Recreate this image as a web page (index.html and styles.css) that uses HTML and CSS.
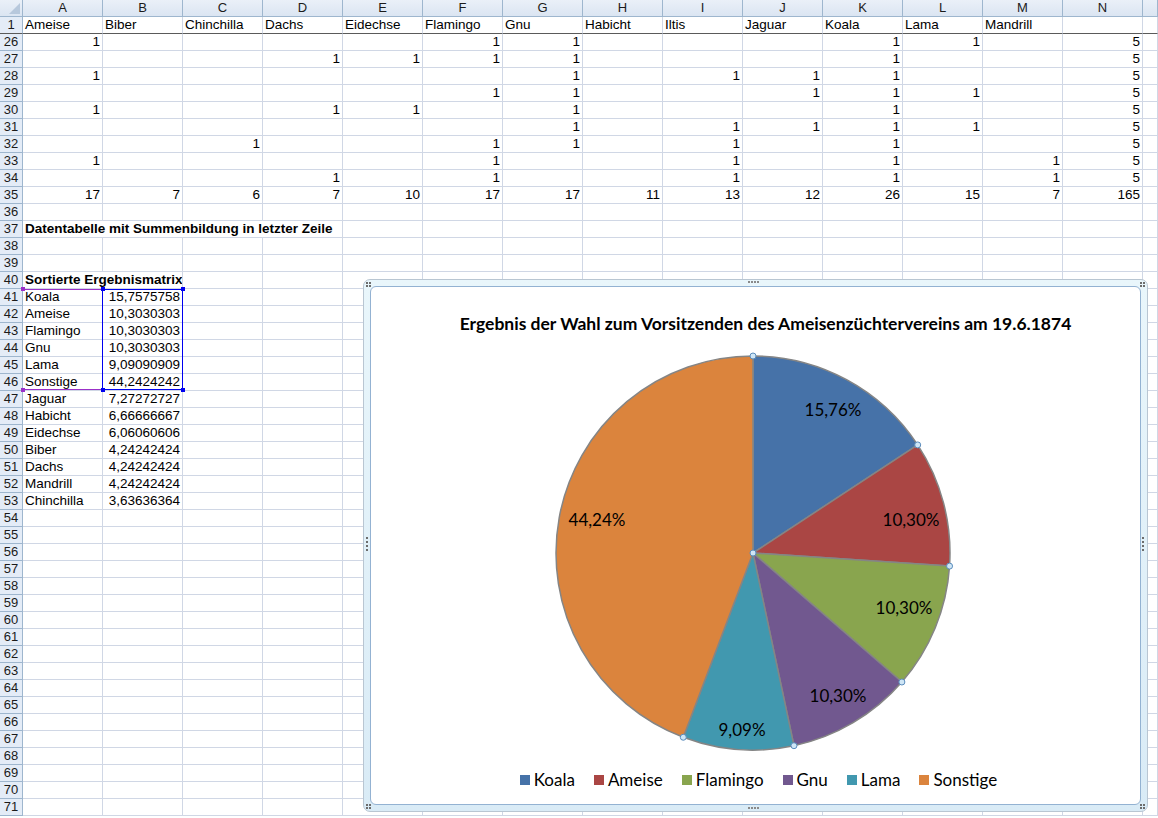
FILE: index.html
```html
<!DOCTYPE html>
<html lang="de">
<head>
    <meta charset="UTF-8">
    <title>Mappe1 - Ameisenzüchterverein</title>
    <link rel="stylesheet" href="styles.css">
</head>
<body>

<div class="sheet" id="sheet"></div>

<!-- Markierung der Diagrammquelle: Kategorien (lila) und Werte (blau) -->
<div class="range range-cat">
    <span class="knob tl"></span><span class="knob bl"></span>
</div>
<div class="range range-val">
    <span class="knob tl"></span><span class="knob tr"></span>
    <span class="knob bl"></span><span class="knob br"></span>
</div>

<div class="chart">
    <span class="grip g-tl"></span><span class="grip g-tr"></span>
    <span class="grip g-bl"></span><span class="grip g-br"></span>
    <span class="grip-h g-top"></span><span class="grip-h g-bottom"></span>
    <span class="grip-v g-left"></span><span class="grip-v g-right"></span>
    <div class="plot">
        <div class="chart-title">Ergebnis der Wahl zum Vorsitzenden des Ameisenzüchtervereins am 19.6.1874</div>
        <svg class="pie" width="768" height="430" viewBox="0 0 768 430">
            <g stroke="#858585" stroke-width="1.5" stroke-linejoin="round">
                <path fill="#4672a8" d="M381 219 L381 22 A197 197 0 0 1 545.70 110.92 Z"/>
                <path fill="#aa4644" d="M381 219 L545.70 110.92 A197 197 0 0 1 577.56 232.12 Z"/>
                <path fill="#89a54e" d="M381 219 L577.56 232.12 A197 197 0 0 1 529.88 348.01 Z"/>
                <path fill="#71588f" d="M381 219 L529.88 348.01 A197 197 0 0 1 421.96 411.70 Z"/>
                <path fill="#4198af" d="M381 219 L421.96 411.70 A197 197 0 0 1 311.29 403.25 Z"/>
                <path fill="#db843d" d="M381 219 L311.29 403.25 A197 197 0 0 1 381 22 Z"/>
            </g>
            <g class="pct">
                <text x="461" y="82">15,76%</text>
                <text x="539" y="192">10,30%</text>
                <text x="532" y="280">10,30%</text>
                <text x="466" y="368">10,30%</text>
                <text x="370" y="402">9,09%</text>
                <text x="225" y="192">44,24%</text>
            </g>
            <!-- Ziehpunkte der markierten Datenreihe -->
            <g fill="#cfe6f6" stroke="#5a8cbc" stroke-width="1">
                <circle cx="381" cy="22" r="3"/>
                <circle cx="545.70" cy="110.92" r="3"/>
                <circle cx="577.56" cy="232.12" r="3"/>
                <circle cx="529.88" cy="348.01" r="3"/>
                <circle cx="421.96" cy="411.70" r="3"/>
                <circle cx="311.29" cy="403.25" r="3"/>
                <circle cx="381" cy="219" r="3"/>
            </g>
        </svg>
        <div class="legend">
            <span class="key"><i style="background:#4672a8"></i>Koala</span>
            <span class="key"><i style="background:#aa4644"></i>Ameise</span>
            <span class="key"><i style="background:#89a54e"></i>Flamingo</span>
            <span class="key"><i style="background:#71588f"></i>Gnu</span>
            <span class="key"><i style="background:#4198af"></i>Lama</span>
            <span class="key"><i style="background:#db843d"></i>Sonstige</span>
        </div>
    </div>
</div>

<script>
    const cols = 'ABCDEFGHIJKLMN'.split('');

    // Stimmzettel: jede Zeile nennt die angekreuzten Spalten, Spalte N ist die Summe (immer 5)
    const votes = {
        26: 'AFGKL', 27: 'DEFGK', 28: 'AGIJK', 29: 'FGJKL', 30: 'ADEGK',
        31: 'GIJKL', 32: 'CFGIK', 33: 'AFIKM', 34: 'DFIKM'
    };

    const ranking = [
        ['Koala', '15,7575758'], ['Ameise', '10,3030303'], ['Flamingo', '10,3030303'],
        ['Gnu', '10,3030303'], ['Lama', '9,09090909'], ['Sonstige', '44,2424242'],
        ['Jaguar', '7,27272727'], ['Habicht', '6,66666667'], ['Eidechse', '6,06060606'],
        ['Biber', '4,24242424'], ['Dachs', '4,24242424'], ['Mandrill', '4,24242424'],
        ['Chinchilla', '3,63636364']
    ];

    const data = {};
    data[1] = ['Ameise', 'Biber', 'Chinchilla', 'Dachs', 'Eidechse', 'Flamingo', 'Gnu',
               'Habicht', 'Iltis', 'Jaguar', 'Koala', 'Lama', 'Mandrill', ''];
    for (const r in votes) {
        data[r] = cols.map(c => votes[r].includes(c) ? '1' : '');
        data[r][13] = '5';
    }
    data[35] = ['17', '7', '6', '7', '10', '17', '17', '11', '13', '12', '26', '15', '7', '165'];
    ranking.forEach((pair, i) => { data[41 + i] = pair; });

    // Überlaufender Fließtext belegt mehrere Spalten
    const wide = {
        37: { text: 'Datentabelle mit Summenbildung in letzter Zeile', span: 4 },
        40: { text: 'Sortierte Ergebnismatrix', span: 2 }
    };

    const sheet = document.getElementById('sheet');

    function cell(cls, text) {
        const div = document.createElement('div');
        div.className = cls;
        div.textContent = text || '';
        sheet.appendChild(div);
        return div;
    }

    // Spaltenköpfe
    cell('corner');
    cols.forEach(c => cell('ch', c));
    cell('ch');

    const rowNumbers = [1];
    for (let r = 26; r <= 71; r++) rowNumbers.push(r);

    rowNumbers.forEach(r => {
        const frozen = r === 1 ? ' frozen' : '';
        cell('rh' + frozen, r);
        const values = data[r] || [];
        let c = 0;
        while (c < cols.length) {
            if (c === 0 && wide[r]) {
                const div = cell('cell bold' + frozen, wide[r].text);
                div.style.gridColumn = 'span ' + wide[r].span;
                c += wide[r].span;
                continue;
            }
            const v = values[c] || '';
            const isNum = /^[\d,]+$/.test(v);
            cell('cell' + (isNum ? ' num' : '') + frozen, v);
            c++;
        }
        cell('cell' + frozen);
    });
</script>

</body>
</html>
```

FILE: styles.css
```css
body {
    margin: 0;
    width: 1158px;
    height: 818px;
    overflow: hidden;
    background: white;
    font-family: "Liberation Sans", Arial, sans-serif;
    position: relative;
}

/* Tabellenblatt */
.sheet {
    display: grid;
    grid-template-columns: 23px repeat(14, 80px) 1fr;
    grid-auto-rows: 17px;
    font-size: 13.5px;
    line-height: 16px;
    color: #000;
}
.sheet > div {
    box-sizing: border-box;
    white-space: nowrap;
    overflow: hidden;
}
.cell {
    border-right: 1px solid #d0d7e5;
    border-bottom: 1px solid #d0d7e5;
    padding: 0 2px;
}
.num {
    text-align: right;
}
.bold {
    font-weight: bold;
}
.ch, .rh, .corner {
    background: linear-gradient(#eaf0f8, #dbe5f2);
    border-right: 1px solid #9eb6ce;
    border-bottom: 1px solid #9eb6ce;
    text-align: center;
    color: #1b1b1b;
    font-size: 13px;
}
.rh {
    background: #e4ecf7;
}
.corner {
    position: relative;
}
.corner::after {
    content: "";
    position: absolute;
    right: 2px;
    bottom: 2px;
    width: 11px;
    height: 11px;
    background: #b7c8dc;
    clip-path: polygon(100% 0, 100% 100%, 0 100%);
}
.frozen {
    border-bottom: 1px solid #5a5a5a;
}

/* Quellbereiche des Diagramms */
.range {
    position: absolute;
    top: 289px;
    height: 101px;
    box-sizing: border-box;
}
.range-cat {
    left: 23px;
    width: 80px;
    border-top: 1px solid #9b30c8;
    border-bottom: 1px solid #9b30c8;
}
.range-val {
    left: 102px;
    width: 81px;
    border: 1px solid #0000f0;
}
.knob {
    position: absolute;
    width: 4px;
    height: 4px;
    background: #0000f0;
}
.range-cat .knob {
    background: #9b30c8;
}
.knob.tl { left: -2px; top: -3px; }
.knob.tr { right: -3px; top: -3px; }
.knob.bl { left: -2px; bottom: -3px; }
.knob.br { right: -3px; bottom: -3px; }

/* Diagrammobjekt */
.chart {
    position: absolute;
    left: 363px;
    top: 279px;
    width: 785px;
    height: 533px;
    box-sizing: border-box;
    padding: 6px;
    border: 1px solid #b9c6d2;
    border-radius: 7px;
    background: linear-gradient(#e9f6fb, #d9ebf6);
}
.plot {
    height: 100%;
    box-sizing: border-box;
    border: 1px solid #93b2d2;
    border-radius: 6px;
    background: white;
    display: flex;
    flex-direction: column;
    align-items: center;
    font-family: Lato, "Open Sans", sans-serif;
}
.chart-title {
    padding-top: 26px;
    height: 21px;
    line-height: 21px;
    font-size: 17.5px;
    font-weight: bold;
    color: #000;
    padding-left: 20px;
}
.pie {
    display: block;
    flex: none;
}
.pct text {
    font-family: Lato, "Open Sans", sans-serif;
    font-size: 17px;
    text-anchor: middle;
    fill: #000;
}
.legend {
    margin-top: 6px;
    display: flex;
    gap: 19px;
    font-size: 17px;
    line-height: 20px;
    padding-left: 6px;
}
.key {
    display: flex;
    align-items: center;
    gap: 4px;
}
.key i {
    width: 10px;
    height: 10px;
}

/* Ziehpunkte am Rahmen */
.grip, .grip-h, .grip-v {
    position: absolute;
    width: 2px;
    height: 2px;
    background: #6d6d6d;
}
.grip {
    box-shadow: 3px 0 #6d6d6d, 0 3px #6d6d6d, 3px 3px #6d6d6d;
}
.grip-h {
    box-shadow: 3px 0 #8a8a8a, 6px 0 #8a8a8a, 9px 0 #8a8a8a;
    background: #8a8a8a;
}
.grip-v {
    box-shadow: 0 4px #6d6d6d, 0 8px #6d6d6d, 0 12px #6d6d6d;
}
.g-tl { left: 2px; top: 2px; }
.g-tr { right: 5px; top: 2px; }
.g-bl { left: 2px; bottom: 5px; }
.g-br { right: 5px; bottom: 5px; }
.g-top { left: 384px; top: 1px; }
.g-bottom { left: 384px; bottom: 2px; }
.g-left { left: 2px; top: 257px; }
.g-right { right: 3px; top: 257px; }
```
